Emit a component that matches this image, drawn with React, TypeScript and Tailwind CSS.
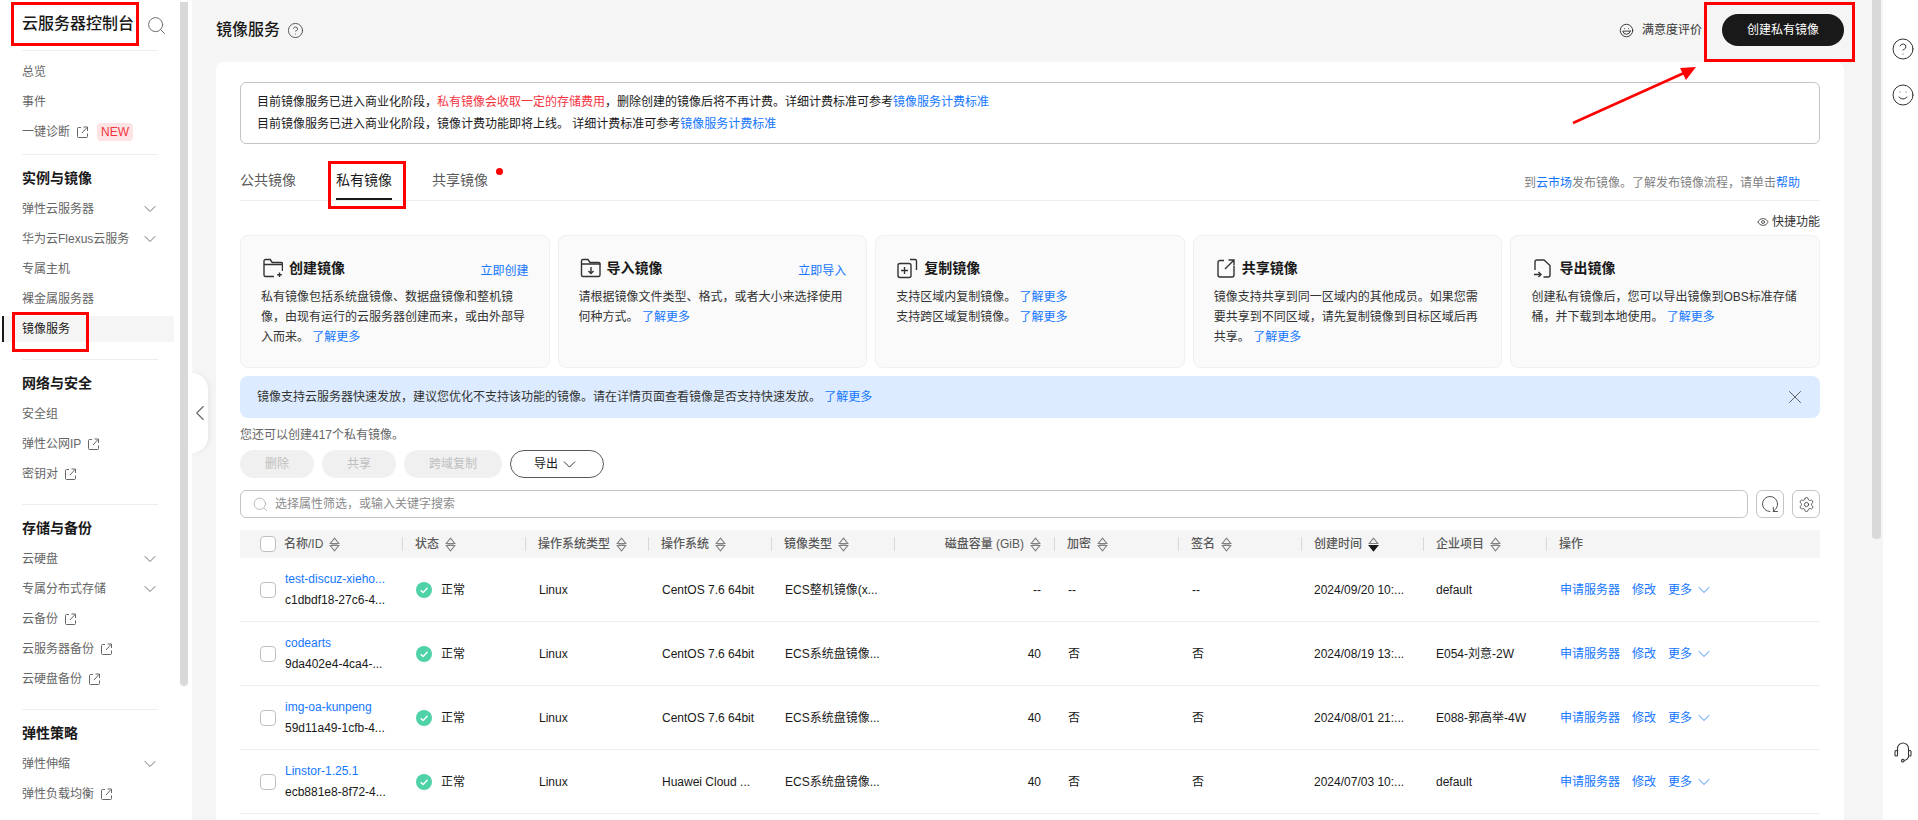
import React from "react";
import { ChevronDown, ChevronLeft, CircleHelp, Eye, Laugh, RotateCw, Search, Settings, Smile, X } from "lucide-react";

type SideItem = { label: string; ext?: boolean; arrow?: boolean; isNew?: boolean; active?: boolean };
type SideGroup = { title?: string; items: SideItem[] };

const sideGroups: SideGroup[] = [
	{ items: [{ label: "总览" }, { label: "事件" }, { label: "一键诊断", ext: true, isNew: true }] },
	{
		title: "实例与镜像",
		items: [
			{ label: "弹性云服务器", arrow: true },
			{ label: "华为云Flexus云服务", arrow: true },
			{ label: "专属主机" },
			{ label: "裸金属服务器" },
			{ label: "镜像服务", active: true },
		],
	},
	{ title: "网络与安全", items: [{ label: "安全组" }, { label: "弹性公网IP", ext: true }, { label: "密钥对", ext: true }] },
	{
		title: "存储与备份",
		items: [
			{ label: "云硬盘", arrow: true },
			{ label: "专属分布式存储", arrow: true },
			{ label: "云备份", ext: true },
			{ label: "云服务器备份", ext: true },
			{ label: "云硬盘备份", ext: true },
		],
	},
	{ title: "弹性策略", items: [{ label: "弹性伸缩", arrow: true }, { label: "弹性负载均衡", ext: true }] },
];

const rows = [
	{ name: "test-discuz-xieho...", id: "c1dbdf18-27c6-4...", os: "CentOS 7.6 64bit", kind: "ECS整机镜像(x...", disk: "--", enc: "--", sign: "--", time: "2024/09/20 10:...", project: "default" },
	{ name: "codearts", id: "9da402e4-4ca4-...", os: "CentOS 7.6 64bit", kind: "ECS系统盘镜像...", disk: "40", enc: "否", sign: "否", time: "2024/08/19 13:...", project: "E054-刘意-2W" },
	{ name: "img-oa-kunpeng", id: "59d11a49-1cfb-4...", os: "CentOS 7.6 64bit", kind: "ECS系统盘镜像...", disk: "40", enc: "否", sign: "否", time: "2024/08/01 21:...", project: "E088-郭高举-4W" },
	{ name: "Linstor-1.25.1", id: "ecb881e8-8f72-4...", os: "Huawei Cloud ...", kind: "ECS系统盘镜像...", disk: "40", enc: "否", sign: "否", time: "2024/07/03 10:...", project: "default" },
];

const tableCols = "grid grid-cols-[162px_123px_123px_123px_123px_160px_124px_123px_122px_123px_274px]";

const ExtIcon = () => (
	<svg width="13" height="13" viewBox="0 0 13 13" fill="none" stroke="#666" strokeWidth="1" className="ml-[6px] shrink-0">
		<path d="M5 1.5H2.5a1 1 0 0 0-1 1v8a1 1 0 0 0 1 1h8a1 1 0 0 0 1-1V7.5M6 7l5-5.5M7.5 1h4v4" />
	</svg>
);

const SortIcon = ({ active }: { active?: boolean }) => (
	<svg width="11" height="15" viewBox="0 0 10 14" className="ml-[6px] shrink-0">
		<path d="M5 1 9 6H1z" fill="none" stroke="#808080" strokeWidth="1" />
		<path d="M5 13 1 8h8z" fill={active ? "#191919" : "none"} stroke={active ? "#191919" : "#808080"} strokeWidth="1" />
		{!active && <path d="M2 6.2h6M2 7.8h6" stroke="#808080" strokeWidth="1" />}
	</svg>
);

const HeadsetIcon = () => (
	<svg width="24" height="24" viewBox="0 0 24 24" fill="none" stroke="#333" strokeWidth="1.1" className="mt-[633px]">
		<path d="M6.5 11V8.5a5.5 5.5 0 0 1 11 0V11" />
		<rect x="4" y="10.5" width="2.5" height="5.5" rx="1" />
		<rect x="17.5" y="10.5" width="2.5" height="5.5" rx="1" />
		<path d="M17.5 16c0 2.5-2 4-4.5 4.5" />
		<circle cx="11.8" cy="20.7" r="1.3" />
	</svg>
);

const Checkbox = () => <span className="w-4 h-4 shrink-0 rounded-[4px] border border-[#bfbfbf] bg-white"></span>;

const Link = ({ children }: { children: React.ReactNode }) => <span className="text-[#1476ff]">{children}</span>;

const Sidebar = () => {
	return (
		<aside className="w-[192px] h-full shrink-0 bg-white flex">
			<div className="w-[178px] shrink-0">
				<div className="h-[50px] pl-[22px] pr-[11px] flex items-center justify-between">
					<span className="text-base font-medium text-[#191919] pb-[2px]">云服务器控制台</span>
					<Search size={21} strokeWidth={1.1} className="text-[#666] shrink-0" />
				</div>
				{sideGroups.map((group, i) => (
					<div key={i} className={`border-t border-[#eeeeee] ml-[22px] mr-[20px] ${group.title ? "pt-2" : "pt-[6px]"} ${i === 0 ? "pb-[7px]" : "pb-[15px]"}`}>
						{group.title && <div className="h-[31px] flex items-center text-sm font-semibold text-[#191919] pb-px">{group.title}</div>}
						{group.items.map((item) => (
							<div key={item.label} className="h-[30px] flex items-center -ml-5 -mr-4">
								<div className={`h-[26px] w-full flex items-center pl-[18px] pr-[14px] border-l-2 text-xs ${item.active ? "border-[#191919] bg-[#f5f5f5] text-[#191919]" : "border-transparent text-[#666]"}`}>
									<span>{item.label}</span>
									{item.ext && <ExtIcon />}
									{item.isNew && <span className="ml-2 h-[18px] w-9 rounded-sm bg-[#fde3e3] text-[#f5333f] flex items-center justify-center">NEW</span>}
									{item.arrow && <ChevronDown size={20} strokeWidth={1} className="ml-auto text-[#555] shrink-0" />}
								</div>
							</div>
						))}
					</div>
				))}
			</div>
			<div className="w-2 h-[684px] mt-[2px] ml-[2px] rounded-b bg-[#d9d9d9]"></div>
		</aside>
	);
};

const FolderPlusIcon = () => (
	<svg width="22" height="22" viewBox="0 0 22 22" fill="none" stroke="#333" strokeWidth="1.4">
		<path d="M13 19.5H4.5a1.5 1.5 0 0 1-1.5-1.5V4a1.5 1.5 0 0 1 1.5-1.5h4.7l2 3H20a1.5 1.5 0 0 1 1.5 1.5v7" />
		<path d="M3 7.5h18M18.5 15.5v4.5M16.2 17.8h4.6" />
	</svg>
);
const FolderDownIcon = () => (
	<svg width="22" height="22" viewBox="0 0 22 22" fill="none" stroke="#333" strokeWidth="1.4">
		<path d="M2.5 18V4a1.5 1.5 0 0 1 1.5-1.5h5l2 3h8.5a1.5 1.5 0 0 1 1.5 1.5v11a1.5 1.5 0 0 1-1.5 1.5H4A1.5 1.5 0 0 1 2.5 18z" />
		<path d="M2.5 7h19M12 10v6.5M9.5 14l2.5 2.5 2.5-2.5" />
	</svg>
);
const CopyPlusIcon = () => (
	<svg width="22" height="22" viewBox="0 0 22 22" fill="none" stroke="#333" strokeWidth="1.4">
		<rect x="2" y="6.5" width="13" height="14" rx="2" />
		<path d="M8.5 10v7M5 13.5h7M14 2.5h5a1.5 1.5 0 0 1 1.5 1.5v9" />
	</svg>
);
const ShareBoxIcon = () => (
	<svg width="22" height="22" viewBox="0 0 22 22" fill="none" stroke="#333" strokeWidth="1.4">
		<path d="M10 3.5H6a2 2 0 0 0-2 2V18a2 2 0 0 0 2 2h12a2 2 0 0 0 2-2V9M11 12l8.5-8.5M14.5 3h5.5v5.5" />
	</svg>
);
const ExportDocIcon = () => (
	<svg width="22" height="22" viewBox="0 0 22 22" fill="none" stroke="#333" strokeWidth="1.4">
		<path d="M4 13V5a2 2 0 0 1 2-2h7l6 5.5V18a2 2 0 0 1-2 2h-4.5" />
		<path d="M3 17.5h6.5M7.5 15l2.5 2.5L7.5 20" />
	</svg>
);

const quickCards = [
	{ icon: <FolderPlusIcon />, title: "创建镜像", action: "立即创建", body: <>私有镜像包括系统盘镜像、数据盘镜像和整机镜像，由现有运行的云服务器创建而来，或由外部导入而来。 <Link>了解更多</Link></> },
	{ icon: <FolderDownIcon />, title: "导入镜像", action: "立即导入", body: <>请根据镜像文件类型、格式，或者大小来选择使用何种方式。 <Link>了解更多</Link></> },
	{ icon: <CopyPlusIcon />, title: "复制镜像", body: <>支持区域内复制镜像。 <Link>了解更多</Link><br />支持跨区域复制镜像。 <Link>了解更多</Link></> },
	{ icon: <ShareBoxIcon />, title: "共享镜像", body: <>镜像支持共享到同一区域内的其他成员。如果您需要共享到不同区域，请先复制镜像到目标区域后再共享。 <Link>了解更多</Link></> },
	{ icon: <ExportDocIcon />, title: "导出镜像", body: <>创建私有镜像后，您可以导出镜像到OBS标准存储桶，并下载到本地使用。 <Link>了解更多</Link></> },
];

const HeaderCell = ({ label, sort = true, active, right }: { label: string; sort?: boolean; active?: boolean; right?: boolean }) => (
	<div className="h-[28px] flex items-center">
		<span className="w-px h-[14px] bg-[#d9d9d9]"></span>
		<div className={`flex-1 flex items-center pl-3 ${right ? "justify-end pr-[13px]" : ""}`}>
			<span>{label}</span>
			{sort && <SortIcon active={active} />}
		</div>
	</div>
);

const Table = () => {
	return (
		<div className="mt-3 text-xs">
			<div className={`${tableCols} h-[28px] bg-[#f5f5f5] text-[#595959] font-medium`}>
				<div className="flex items-center pl-5 gap-2">
					<Checkbox />
					<span>名称/ID</span>
					<span className="-ml-2"><SortIcon /></span>
				</div>
				<HeaderCell label="状态" />
				<HeaderCell label="操作系统类型" />
				<HeaderCell label="操作系统" />
				<HeaderCell label="镜像类型" />
				<HeaderCell label="磁盘容量 (GiB)" right />
				<HeaderCell label="加密" />
				<HeaderCell label="签名" />
				<HeaderCell label="创建时间" active />
				<HeaderCell label="企业项目" />
				<HeaderCell label="操作" sort={false} />
			</div>
			{rows.map((row) => (
				<div key={row.id} className={`${tableCols} h-[64px] items-center border-b border-[#eeeeee] text-[#191919]`}>
					<div className="flex items-center pl-5 gap-[9px]">
						<Checkbox />
						<div className="leading-[21px] whitespace-nowrap">
							<div className="text-[#1476ff]">{row.name}</div>
							<div>{row.id}</div>
						</div>
					</div>
					<div className="flex items-center pl-[14px] gap-[9px]">
						<svg width="16" height="16" viewBox="0 0 16 16">
							<circle cx="8" cy="8" r="8" fill="#4fd2a8" />
							<path d="M4.6 8.2 7.1 10.6 11.5 5.8" fill="none" stroke="#fff" strokeWidth="1.4" />
						</svg>
						<span>正常</span>
					</div>
					<div className="pl-[14px]">Linux</div>
					<div className="pl-[14px] whitespace-nowrap">{row.os}</div>
					<div className="pl-[14px] whitespace-nowrap">{row.kind}</div>
					<div className="text-right pr-[13px]">{row.disk}</div>
					<div className="pl-[14px]">{row.enc}</div>
					<div className="pl-[14px]">{row.sign}</div>
					<div className="pl-[13px] whitespace-nowrap">{row.time}</div>
					<div className="pl-[13px] whitespace-nowrap">{row.project}</div>
					<div className="pl-[14px] flex items-center gap-3 text-[#1476ff]">
						<span>申请服务器</span>
						<span>修改</span>
						<span className="flex items-center gap-[2px]">
							更多 <ChevronDown size={20} strokeWidth={1} />
						</span>
					</div>
				</div>
			))}
		</div>
	);
};

const MainContent = () => {
	return (
		<main className="flex-1 min-w-0 h-full bg-[#f5f5f5] pl-6 pr-7 relative">
			<div className="h-[62px] pb-[2px] flex items-center">
				<span className="text-base font-medium text-[#191919]">镜像服务</span>
				<CircleHelp size={17} strokeWidth={1.1} className="ml-[7px] text-[#333]" />
				<Laugh size={15} strokeWidth={1.5} className="ml-auto text-[#333]" />
				<span className="ml-2 text-xs text-[#333]">满意度评价</span>
				<button className="ml-5 w-[122px] h-8 rounded-full bg-[#191919] text-white text-xs">创建私有镜像</button>
			</div>

			<section className="bg-white rounded-t-lg px-6 pt-5 h-[800px]">
				<div className="h-[62px] rounded-md border border-[#c4c4c4] px-4 flex flex-col justify-center text-xs leading-[22px] text-[#191919]">
					<p>
						目前镜像服务已进入商业化阶段，<span className="text-[#f5333f]">私有镜像会收取一定的存储费用</span>，删除创建的镜像后将不再计费。详细计费标准可参考<Link>镜像服务计费标准</Link>
					</p>
					<p>
						目前镜像服务已进入商业化阶段，镜像计费功能即将上线。 详细计费标准可参考<Link>镜像服务计费标准</Link>
					</p>
				</div>

				<div className="h-[57px] flex items-end border-b border-[#eeeeee] text-sm text-[#595959]">
					<div className="h-[38px] pb-[2px] flex items-center">公共镜像</div>
					<div className="ml-10 h-[38px] flex items-center border-b-2 border-[#191919] text-[#191919]">私有镜像</div>
					<div className="ml-10 h-[38px] pb-[2px] flex items-center relative">
						共享镜像
						<span className="absolute -right-[15px] top-[6px] w-[7px] h-[7px] rounded-full bg-[#f00]"></span>
					</div>
					<div className="ml-auto mr-5 h-[34px] flex items-center text-xs text-[#808080]">
						到<Link>云市场</Link>发布镜像。了解发布镜像流程，请单击<Link>帮助</Link>
					</div>
				</div>

				<div className="h-[34px] pt-2 flex items-center justify-end text-xs text-[#333]">
					<Eye size={12} strokeWidth={1.6} className="mr-[3px]" />
					快捷功能
				</div>

				<div className="grid grid-cols-5 gap-2">
					{quickCards.map((card) => (
						<div key={card.title} className="h-[133px] rounded-lg border border-[#f0f0f0] bg-[#fafafa] px-5 pt-5">
							<div className="h-6 flex items-center">
								{card.icon}
								<span className="ml-[6px] text-sm font-semibold text-[#191919]">{card.title}</span>
								{card.action && <span className="ml-auto self-end leading-[18px] text-xs text-[#1476ff]">{card.action}</span>}
							</div>
							<p className="mt-[7px] text-xs leading-5 text-[#333]">{card.body}</p>
						</div>
					))}
				</div>

				<div className="mt-2 h-[42px] rounded-lg bg-[#dcebff] pl-[17px] pr-[14px] flex items-center justify-between text-xs text-[#333]">
					<p>
						镜像支持云服务器快速发放，建议您优化不支持该功能的镜像。请在详情页面查看镜像是否支持快速发放。 <Link>了解更多</Link>
					</p>
					<X size={22} strokeWidth={1} className="text-[#555]" />
				</div>

				<div className="mt-2 h-[18px] flex items-center text-xs text-[#666]">您还可以创建417个私有镜像。</div>

				<div className="mt-[6px] flex gap-2 text-xs">
					<button className="w-[74px] h-7 rounded-full bg-[#f0f0f0] text-[#bfbfbf]">删除</button>
					<button className="w-[74px] h-7 rounded-full bg-[#f0f0f0] text-[#bfbfbf]">共享</button>
					<button className="w-[98px] h-7 rounded-full bg-[#f0f0f0] text-[#bfbfbf]">跨域复制</button>
					<button className="w-[94px] h-7 rounded-full border border-[#595959] text-[#191919] flex items-center justify-center gap-px">
						导出 <ChevronDown size={21} strokeWidth={1} />
					</button>
				</div>

				<div className="mt-3 flex gap-2">
					<div className="flex-1 h-7 rounded-md border border-[#c4c4c4] flex items-center pl-[11px] text-xs text-[#8c8c8c]">
						<Search size={17} strokeWidth={1.1} className="text-[#aaa] mr-[6px]" />
						选择属性筛选，或输入关键字搜索
					</div>
					<button className="w-7 h-7 rounded-md border border-[#c4c4c4] flex items-center justify-center">
						<RotateCw size={20} strokeWidth={1} className="text-[#333] rotate-90" />
					</button>
					<button className="w-7 h-7 rounded-md border border-[#c4c4c4] flex items-center justify-center">
						<Settings size={17} strokeWidth={1.1} className="text-[#333]" />
					</button>
				</div>

				<Table />
			</section>

			<div className="absolute left-0 top-[373px] w-4 h-[80px] bg-white rounded-r-2xl shadow-[2px_0_4px_rgba(0,0,0,0.05)] flex items-center justify-center">
				<ChevronLeft size={26} strokeWidth={1} className="text-[#666] shrink-0" />
			</div>
		</main>
	);
};

const App = () => {
	return (
		<div className="relative w-full h-[820px] overflow-hidden flex bg-white font-['Liberation_Sans','Noto_Sans_CJK_SC',sans-serif]">
			<Sidebar />
			<MainContent />
			<div className="w-[11px] shrink-0 h-full bg-[#f5f5f5]">
				<div className="w-[9px] h-[539px] bg-[#d9d9d9] rounded-b"></div>
			</div>
			<aside className="w-[35px] shrink-0 h-full bg-white flex flex-col items-center pl-[4px] text-[#333]">
				<CircleHelp size={24} strokeWidth={1} className="mt-[37px]" />
				<Smile size={24} strokeWidth={1} className="mt-[22px]" />
				<HeadsetIcon />
			</aside>

			{/* 标注框 */}
			<div className="absolute left-[11px] top-[2px] w-[128px] h-[44px] border-[3px] border-[#f00]"></div>
			<div className="absolute left-[12px] top-[312px] w-[77px] h-[40px] border-[3px] border-[#f00]"></div>
			<div className="absolute left-[328px] top-[161px] w-[78px] h-[48px] border-[3px] border-[#f00]"></div>
			<div className="absolute left-[1704px] top-[2px] w-[151px] h-[60px] border-[3px] border-[#f00]"></div>
			<svg className="absolute left-[1570px] top-[64px]" width="130" height="62" viewBox="0 0 130 62">
				<path d="M3 59 114 9" stroke="#f00" strokeWidth="2.5" />
				<path d="M126 3 110 4 116 16z" fill="#f00" />
			</svg>
		</div>
	);
};

export default App;
